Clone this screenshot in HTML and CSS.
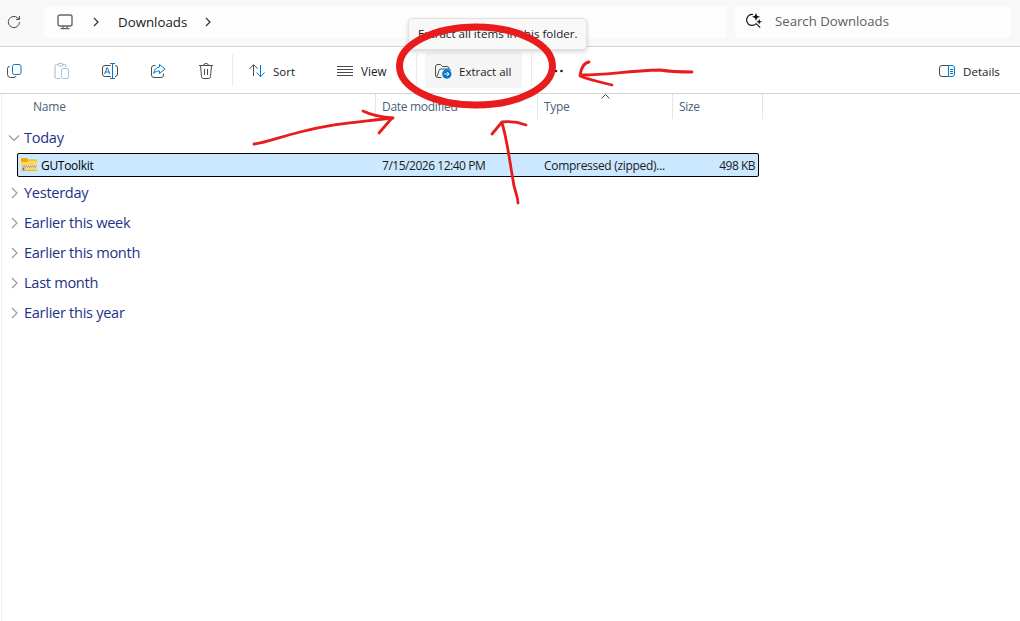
FILE: index.html
```html
<!DOCTYPE html>
<html lang="en">
<head>
    <meta charset="UTF-8">
    <meta name="viewport" content="width=device-width, initial-scale=1.0">
    <title>Downloads</title>
    <link rel="stylesheet" href="styles.css">
</head>
<body>
    <div class="window">
        <header class="nav-bar">
            <svg class="refresh" width="14" height="14" viewBox="0 0 14 14"><path d="M12.5 7.2A5.6 5.6 0 1 1 10.6 2.8L12.3 4.2M12.4 1v3.4H9"/></svg>
            <nav class="address">
                <svg class="monitor" width="16" height="16" viewBox="0 0 16 16"><rect x="1" y="1" width="14" height="11" rx="2"/><path d="M6 12v2.5M10 12v2.5M3.5 14.6h9"/></svg>
                <svg class="crumb-arrow" width="6" height="10" viewBox="0 0 6 10"><path d="M1 1l4 4-4 4"/></svg>
                <span class="crumb">Downloads</span>
                <svg class="crumb-arrow" width="6" height="10" viewBox="0 0 6 10"><path d="M1 1l4 4-4 4"/></svg>
            </nav>
            <div class="search">
                <svg width="18" height="16" viewBox="0 0 18 16"><path d="M8 1.5A5.5 5.500 0 1 0 11.200 10.600M11 10.400l4.200 4.300"/><path class="solid" d="M11 0l1.100 2.700 2.900 1.100-2.900 1.100L11 7.800 9.900 4.900 7 3.800l2.900-1.100zM14.200 6l.8 2 2 .8-2 .8-.8 2-.8-2-2-.8 2-.8z"/></svg>
                <span>Search Downloads</span>
            </div>
        </header>

        <div class="toolbar">
            <button class="icon-button" aria-label="Copy">
                <svg width="16" height="16" viewBox="0 0 16 16"><path d="M4 3.500H3.500A2 2 0 0 0 1.500 5.500v6a3 3 0 0 0 3 3h3.500a2 2 0 0 0 2-1.500"/><rect class="blue" x="6.500" y="1.500" width="8.500" height="10" rx="2"/></svg>
            </button>
            <button class="icon-button disabled" aria-label="Paste">
                <svg width="16" height="16" viewBox="0 0 16 16"><path d="M6 15.500H2.500a1.500 1.500 0 0 1-1.500-1.500V3a1.500 1.500 0 0 1 1.500-1.500H4M9 1.500h1.500A1.500 1.500 0 0 1 12 3v1"/><rect x="4" y=".5" width="5" height="2.500" rx="1.200"/><rect class="blue" x="7.500" y="5.500" width="7" height="10" rx="1.500"/></svg>
            </button>
            <button class="icon-button" aria-label="Rename">
                <svg width="16" height="16" viewBox="0 0 16 16"><path d="M8.800 2.500H3a2.500 2.500 0 0 0-2.500 2.500v6A2.500 2.500 0 0 0 3 13.500h5.800M13 2.500a2.500 2.500 0 0 1 2.500 2.500v6a2.500 2.500 0 0 1-2.500 2.500"/><path class="blue" d="M8 .5h5M10.500 .5v15M8 15.500h5M2.500 11l2.700-6.500L7.900 11M3.400 9h3.600"/></svg>
            </button>
            <button class="icon-button" aria-label="Share">
                <svg width="16" height="16" viewBox="0 0 16 16"><path d="M5.500 2.500H4A2.500 2.500 0 0 0 1.500 5v7a2.500 2.500 0 0 0 2.500 2.500h7a2.500 2.500 0 0 0 2.500-2.500v-1.500"/><path class="blue" d="M9.500 1.500L15 6l-5.500 4.500V8C7 7.800 5 8.500 3.800 10.500 4 6.500 6.500 4.300 9.500 4z"/></svg>
            </button>
            <button class="icon-button" aria-label="Delete">
                <svg width="16" height="16" viewBox="0 0 16 16"><path d="M1 2.500h14M5.500 2.500a2.500 2 0 0 1 5 0M2.500 2.500l1 11a2 2 0 0 0 2 2h5a2 2 0 0 0 2-2l1-11M6.500 6v6M9.500 6v6"/></svg>
            </button>
            <div class="separator after-icons"></div>
            <button class="tool sort">
                <svg width="16" height="16" viewBox="0 0 16 16"><path d="M4.500 13V2M.5 6l4-4.300L8.500 5.500"/><path class="blue" d="M11.500 2v11.500M7.500 9.500l4 4.200 4-4.200"/></svg>
                <span>Sort</span>
            </button>
            <button class="tool view">
                <svg width="16" height="16" viewBox="0 0 16 16"><path d="M0 3.500h16M0 6.500h16M0 9.500h16M0 12.500h16"/></svg>
                <span>View</span>
            </button>
            <div class="separator"></div>
            <button class="tool extract">
                <svg width="17" height="16" viewBox="0 0 17 16"><path d="M6.500 14.500H3A2.500 2.500 0 0 1 .5 12V4A2.500 2.500 0 0 1 3 1.500h2.500l2 2H12A2 2 0 0 1 14 5.500M2 13.500l2-6A2 2 0 0 1 6 6h8a1.500 1.500 0 0 1 1.500 1.500"/><circle class="badge" cx="11.800" cy="11" r="4.700"/><path class="badge-arrow" d="M9.300 11h4.700M12 8.900l2.100 2.100-2.100 2.100"/></svg>
                <span>Extract all</span>
            </button>
            <div class="separator after-extract"></div>
            <button class="icon-button" aria-label="See more">
                <svg width="16" height="16" viewBox="0 0 16 16"><circle class="dot" cx="2" cy="8" r="1.300"/><circle class="dot" cx="8" cy="8" r="1.300"/><circle class="dot" cx="13.500" cy="8" r="1.300"/></svg>
            </button>
            <button class="tool details">
                <svg width="16" height="16" viewBox="0 0 16 16"><path d="M9.500 2.500H3A2.500 2.500 0 0 0 .5 5v6A2.500 2.500 0 0 0 3 13.500h6.500"/><path class="blue" d="M9.500 2.500H13A2.500 2.500 0 0 1 15.500 5v6a2.500 2.500 0 0 1-2.500 2.500H9.500zM11 6.500h3M11 8.500h3M11 10.500h3"/></svg>
                <span>Details</span>
            </button>
        </div>

        <main class="files">
            <div class="columns">
                <span class="column name">Name</span>
                <span class="column">Date modified</span>
                <span class="column sorted">Type
                    <svg width="9" height="5" viewBox="0 0 9 5"><path d="M.5 4.500l4-4 4 4"/></svg>
                </span>
                <span class="column">Size</span>
                <span class="column"></span>
            </div>

            <div class="group">
                <svg width="12" height="12" viewBox="0 0 12 12"><path d="M1 3.500l5 5 5-5"/></svg>
                <span>Today</span>
            </div>
            <div class="file">
                <div class="file-name">
                    <svg width="16" height="14" viewBox="0 0 16 14"><path fill="#f2a900" d="M0 1a1 1 0 0 1 1-1h4.500L7.500 1.500H15a1 1 0 0 1 1 1v2H0z"/><path fill="#ffd75e" d="M0 4h6l1.500-1.500H16V12a1 1 0 0 1-1 1H0z"/><path fill="#e8b12f" d="M3 12h13v1H3z"/><path stroke="#e8e2d0" stroke-width="2" d="M0 8.500h15.500"/><path stroke="#8b857c" stroke-width="1" stroke-dasharray="1 1" d="M1 8h14.500M2 9h13.500"/><rect x="1" y="9" width="3" height="4.500" rx="1" fill="#b5b5b5"/><path stroke="#666" d="M2.500 10v2"/></svg>
                    <span>GUToolkit</span>
                </div>
                <span class="date">7/15/2026 12:40 PM</span>
                <span class="type">Compressed (zipped)...</span>
                <span class="size">498 KB</span>
            </div>
            <div class="group">
                <svg width="12" height="12" viewBox="0 0 12 12"><path d="M4 1l5 5-5 5"/></svg>
                <span>Yesterday</span>
            </div>
            <div class="group">
                <svg width="12" height="12" viewBox="0 0 12 12"><path d="M4 1l5 5-5 5"/></svg>
                <span>Earlier this week</span>
            </div>
            <div class="group">
                <svg width="12" height="12" viewBox="0 0 12 12"><path d="M4 1l5 5-5 5"/></svg>
                <span>Earlier this month</span>
            </div>
            <div class="group">
                <svg width="12" height="12" viewBox="0 0 12 12"><path d="M4 1l5 5-5 5"/></svg>
                <span>Last month</span>
            </div>
            <div class="group">
                <svg width="12" height="12" viewBox="0 0 12 12"><path d="M4 1l5 5-5 5"/></svg>
                <span>Earlier this year</span>
            </div>
        </main>

        <div class="tooltip">Extract all items in this folder.</div>

        <!-- hand drawn marks -->
        <svg class="marks" width="1020" height="621" viewBox="0 0 1020 621">
            <ellipse cx="476" cy="66" rx="76.500" ry="39"/>
            <path d="M254 144C264 143 280 137 300 132C335 123 350 123 393 118"/>
            <path d="M363 111C371 115 381 117 392 118L379 133"/>
            <path d="M583 75C608 75 625 71 660 70C672 72 680 72 692 72"/>
            <path d="M589 62C583 63 581 68 580 76C590 80 600 82 612 85"/>
            <path d="M518 203C518 195 514 191 513 180C509 157 507 139 502 123"/>
            <path d="M492 134L502 122C511 121 518 122 526 125"/>
        </svg>
    </div>
</body>
</html>
```
FILE: styles.css
```css
* {
    box-sizing: border-box;
}

body {
    margin: 0;
    font-family: "Open Sans", "Noto Sans", sans-serif;
    font-size: 11.5px;
    color: #1b1b1b;
    background-color: #ffffff;
}

svg {
    flex: none;
    fill: none;
    stroke: #4b4b4b;
    stroke-width: 1;
}

svg .blue {
    stroke: #0078d4;
}

.window {
    position: relative;
    height: 621px;
    overflow: hidden;
}

/* address and search */
.nav-bar {
    display: flex;
    align-items: flex-start;
    height: 47px;
    padding: 6px 9px 0 7px;
    background-color: #f8f8f8;
    border-bottom: 1px solid #d3d3d3;
}

.refresh {
    margin: 9px 23px 0 0;
}

.address,
.search {
    display: flex;
    align-items: center;
    height: 32px;
    border-radius: 4px;
    background-color: #fdfdfd;
}

.address {
    width: 683px;
    margin-right: 8px;
    padding-left: 13px;
    font-size: 13.3px;
}

.monitor {
    margin-right: 20px;
    stroke: #666666;
    stroke-width: 1.4;
}

.crumb-arrow {
    stroke: #333333;
    stroke-width: 1.2;
}

.crumb {
    width: 69px;
    margin: 0 18px 0 19px;
    white-space: nowrap;
}

.search {
    flex: 1;
    gap: 12px;
    padding: 0 0 2px 10px;
    font-size: 13.2px;
    color: #606060;
}

.search svg {
    stroke: #1b1b1b;
    stroke-width: 1.2;
}

.search .solid {
    fill: #111111;
    stroke: none;
}

/* command bar */
.toolbar {
    display: flex;
    align-items: center;
    height: 47px;
    padding-right: 20px;
    border-bottom: 1px solid #d3d3d3;
}

button {
    display: flex;
    align-items: center;
    padding: 2px 0 0;
    border: none;
    background: none;
    font: inherit;
    color: inherit;
    white-space: nowrap;
}

.icon-button {
    justify-content: center;
    width: 48px;
    height: 36px;
}

.icon-button:first-child {
    margin-left: -10px;
}

.disabled {
    opacity: 0.4;
}

.separator {
    width: 1px;
    height: 32px;
    background-color: #e9e9e9;
}

.after-icons {
    margin-left: 2px;
}

.tool {
    gap: 8px;
    height: 36px;
}

.sort {
    width: 88px;
    padding-left: 16px;
}

.view {
    width: 95px;
    padding-left: 16px;
    font-size: 11.7px;
}

.extract {
    width: 97px;
    margin: 0 9px 0 8px;
    padding-left: 10px;
    gap: 7px;
    border-radius: 4px;
    background-color: #f5f5f5;
}

.details {
    width: 61px;
    margin-left: auto;
    font-size: 11.6px;
}

.dot {
    fill: #1b1b1b;
    stroke: none;
}

.badge {
    fill: #0078d4;
    stroke: none;
}

.badge-arrow {
    stroke: #ffffff;
}

/* file list */
.files {
    height: 527px;
    margin-left: 1px;
    border-left: 1px solid #f0f0f0;
}

.columns {
    display: grid;
    grid-template-columns: 373px 162px 135px 90px 1fr;
    height: 25px;
    margin-bottom: 4px;
    font-size: 12px;
    letter-spacing: -0.3px;
    line-height: 25px;
    color: #4c607a;
}

.column {
    padding-left: 6px;
    border-left: 1px solid #e5e5e5;
}

.column.name {
    padding-left: 31px;
    border-left: none;
    letter-spacing: -0.2px;
}

.sorted {
    position: relative;
}

.sorted svg {
    position: absolute;
    top: 0;
    left: 63px;
}

.group {
    display: flex;
    align-items: center;
    gap: 4px;
    height: 30px;
    padding: 0 0 2px 6px;
    font-size: 14.6px;
    letter-spacing: -0.3px;
    color: #1e3287;
}

.group svg {
    margin-top: 1px;
    stroke: #9a9a9a;
    stroke-width: 1.2;
}

.file {
    display: grid;
    grid-template-columns: 364px 162px 135px 1fr;
    align-items: center;
    width: 742px;
    height: 24px;
    margin: 0 0 1px 15px;
    padding-right: 3px;
    border: 1px solid #000000;
    border-radius: 2px;
    background-color: #cce8ff;
    font-size: 12px;
    letter-spacing: -0.3px;
    white-space: nowrap;
}

.file-name {
    display: flex;
    align-items: center;
    gap: 4px;
    padding-left: 3px;
    color: #000000;
}

.file-name svg {
    stroke: none;
}

.date {
    letter-spacing: -0.47px;
}

.size {
    letter-spacing: -0.5px;
    text-align: right;
}

.tooltip {
    position: absolute;
    top: 18px;
    left: 408px;
    width: 179px;
    height: 32px;
    padding-left: 9px;
    border: 1px solid #e2e2e2;
    border-radius: 4px;
    background-color: #f8f8f8;
    box-shadow: 0 2px 4px rgba(0, 0, 0, 0.16);
    font-size: 11.6px;
    line-height: 30px;
    white-space: nowrap;
}

.marks {
    position: absolute;
    top: 0;
    left: 0;
    pointer-events: none;
    stroke: #e81c1c;
    stroke-width: 2.8;
    stroke-linecap: round;
    stroke-linejoin: round;
}

.marks ellipse {
    stroke-width: 7;
}
```
